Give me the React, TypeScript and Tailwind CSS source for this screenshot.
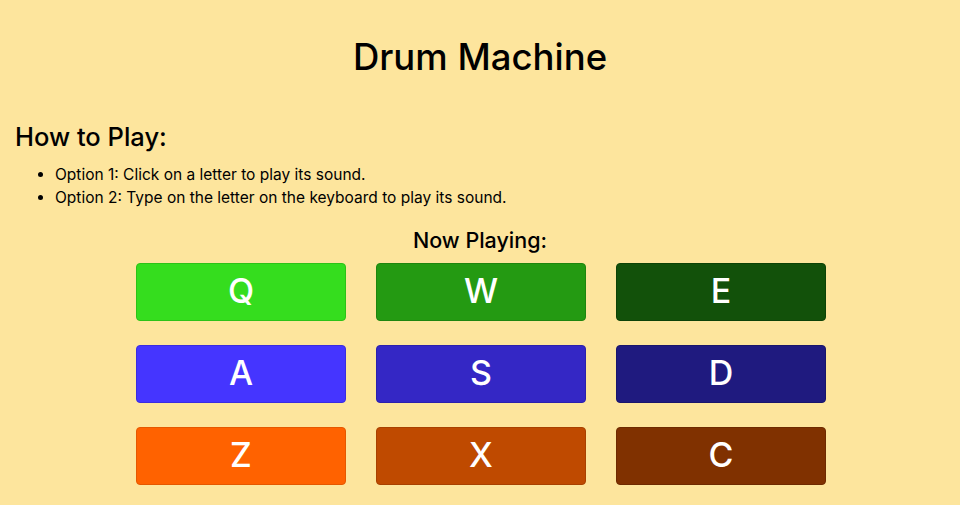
const pads = [
  { key: 'Q', bg: 'bg-[#35dd1e]', border: 'border-[#2cc218]' },
  { key: 'W', bg: 'bg-[#249a12]', border: 'border-[#1e850f]' },
  { key: 'E', bg: 'bg-[#12510a]', border: 'border-[#0d4207]' },
  { key: 'A', bg: 'bg-[#4535ff]', border: 'border-[#3a2ce0]' },
  { key: 'S', bg: 'bg-[#3427c5]', border: 'border-[#2b20ad]' },
  { key: 'D', bg: 'bg-[#1f1a7f]', border: 'border-[#19156b]' },
  { key: 'Z', bg: 'bg-[#ff6200]', border: 'border-[#e55800]' },
  { key: 'X', bg: 'bg-[#bf4a00]', border: 'border-[#a84100]' },
  { key: 'C', bg: 'bg-[#803100]', border: 'border-[#6e2a00]' },
];

export default function App() {
  return (
    <div className="min-h-screen bg-[#fde59d] text-black px-[15px] pt-[30px] font-['Inter',sans-serif]">
      <h1 className="text-center text-[36.5px] leading-[54px] font-medium">Drum Machine</h1>

      <h2 className="mt-[37px] text-[25.5px] leading-[32px] font-medium">How to Play:</h2>
      <ul className="mt-[10px] pl-[40px] list-disc text-[15.5px] leading-[23px]">
        <li>Option 1: Click on a letter to play its sound.</li>
        <li>Option 2: Type on the letter on the keyboard to play its sound.</li>
      </ul>

      <p className="mt-[18px] text-center text-[21.5px] leading-[26px] font-medium">Now Playing:</p>

      <div className="mx-auto mt-[10px] grid w-[690px] translate-x-[1px] grid-cols-3 gap-x-[30px] gap-y-[24px]">
        {pads.map((p) => (
          <button
            key={p.key}
            className={`h-[58px] rounded-[4px] border pb-[3px] ${p.bg} ${p.border} text-white text-[34px] font-medium flex items-center justify-center`}
          >
            {p.key}
          </button>
        ))}
      </div>
    </div>
  );
}
